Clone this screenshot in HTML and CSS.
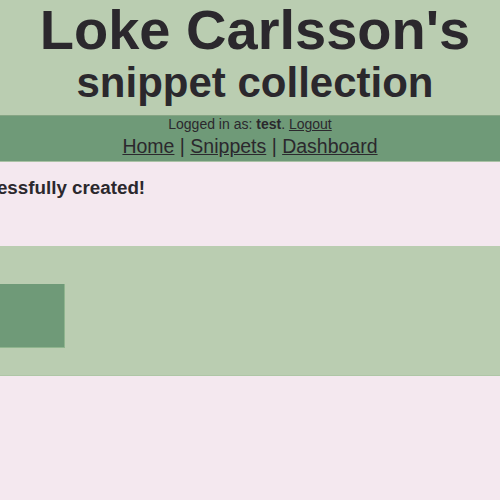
FILE: index.html
```html
<!DOCTYPE html>
<html lang="en">
<head>
<meta charset="utf-8">
<title>Loke Carlsson's snippet collection</title>
<link rel="stylesheet" href="styles.css">
</head>
<body>
<header class="site-header">
  <h1 class="title">
    <span class="title-main">Loke Carlsson's</span>
    <span class="title-sub">snippet collection</span>
  </h1>
</header>
<nav class="site-nav">
  <div class="login">Logged in as: <b>test</b>. <a href="#">Logout</a></div>
  <div class="links"><a href="#">Home</a> | <a href="#">Snippets</a> | <a href="#">Dashboard</a></div>
</nav>
<main class="main">
  <div class="wrap">
    <p class="flash">Snippet successfully created!</p>
  </div>
  <section class="band">
    <div class="wrap">
      <div class="block"></div>
    </div>
  </section>
</main>
</body>
</html>
```
FILE: styles.css
```css
html, body {
  margin: 0;
  padding: 0;
  overflow-x: hidden;
}
body {
  background: #f4e8ef;
  color: #2b282d;
  font-family: "Liberation Sans", Arial, sans-serif;
}
.site-header {
  background: #bacdb1;
  text-align: center;
  padding: 2px 0 10px;
  height: 103px;
}
.title {
  margin: 0 0 0 10px;
  font-weight: bold;
}
.title-main {
  display: block;
  font-size: 56px;
  line-height: 56px;
}
.title-sub {
  display: block;
  font-size: 42px;
  line-height: 42px;
  margin-top: 4px;
}
.site-nav {
  background: #6f9a78;
  border-top: 1px solid #86a584;
  border-bottom: 1px solid #a9c2a5;
  text-align: center;
  padding: 0 0 4px;
  color: #2b282d;
}
.site-nav a {
  color: #2b282d;
}
.login {
  font-size: 14px;
  line-height: 16px;
}
.links {
  font-size: 19.5px;
  line-height: 22px;
  margin-top: 3px;
}
.main {
  padding-top: 15px;
}
.wrap {
  display: flex;
  justify-content: center;
}
.flash {
  width: 740px;
  flex: none;
  margin: 0;
  font-size: 18.8px;
  line-height: 21px;
  font-weight: bold;
}
.band {
  margin-top: 48px;
  background: #bacdb1;
  border-bottom: 1px solid #aec6a6;
  padding: 38px 0 27px;
}
.band .wrap {
  justify-content: flex-start;
  margin-left: -110px;
}
.block {
  flex: none;
  width: 174px;
  height: 63px;
  background: #6f9a78;
  border-right: 1px solid #8fb58e;
  border-bottom: 1px solid #8fb58e;
}
```
